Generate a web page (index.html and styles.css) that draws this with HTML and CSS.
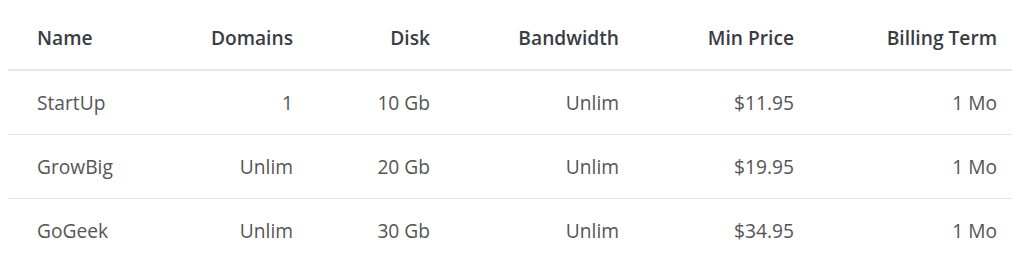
FILE: index.html
```html
<!DOCTYPE html>
<html lang="en">
<head>
<meta charset="utf-8">
<title>Hosting plans</title>
<link rel="stylesheet" href="styles.css">
</head>
<body>
<table class="plans">
  <colgroup>
    <col class="c1"><col class="c2"><col class="c3"><col class="c4"><col class="c5"><col class="c6">
  </colgroup>
  <thead>
    <tr>
      <th class="left">Name</th>
      <th>Domains</th>
      <th>Disk</th>
      <th>Bandwidth</th>
      <th>Min Price</th>
      <th>Billing Term</th>
    </tr>
  </thead>
  <tbody>
    <tr>
      <td class="left">StartUp</td>
      <td>1</td>
      <td>10 Gb</td>
      <td>Unlim</td>
      <td>$11.95</td>
      <td>1 Mo</td>
    </tr>
    <tr>
      <td class="left">GrowBig</td>
      <td>Unlim</td>
      <td>20 Gb</td>
      <td>Unlim</td>
      <td>$19.95</td>
      <td>1 Mo</td>
    </tr>
    <tr>
      <td class="left">GoGeek</td>
      <td>Unlim</td>
      <td>30 Gb</td>
      <td>Unlim</td>
      <td>$34.95</td>
      <td>1 Mo</td>
    </tr>
  </tbody>
</table>
</body>
</html>
```
FILE: styles.css
```css
html, body {
  margin: 0;
  padding: 0;
  background: #ffffff;
}
body {
  padding: 0 12px 0 8px;
  font-family: "Open Sans", "Noto Sans", sans-serif;
  font-size: 19.2px;
}
.plans {
  width: 1004px;
  border-collapse: collapse;
  table-layout: fixed;
}
.c1 { width: 157px; }
.c2 { width: 143px; }
.c3 { width: 137px; }
.c4 { width: 189px; }
.c5 { width: 175px; }
.c6 { width: 203px; }
.plans th,
.plans td {
  text-align: right;
  padding: 0 15px;
  white-space: nowrap;
}
.plans th.left,
.plans td.left {
  text-align: left;
  padding-left: 29px;
}
.plans th {
  font-weight: 600;
  color: #3b3b44;
  height: 70px;
  border-bottom: 2px solid #e6e6e6;
  vertical-align: middle;
  padding-top: 6px;
  box-sizing: border-box;
}
.plans td {
  color: #555555;
  height: 63px;
  border-bottom: 1px solid #e6e6e6;
  vertical-align: middle;
}
.plans tbody tr:last-child td {
  border-bottom: none;
}
```
